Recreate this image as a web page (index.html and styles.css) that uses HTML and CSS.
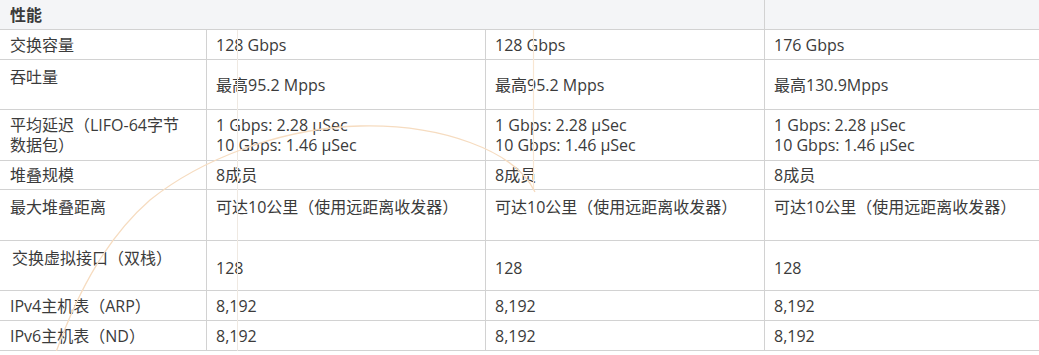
FILE: index.html
```html
<!DOCTYPE html>
<html lang="zh-CN">
<head>
<meta charset="utf-8">
<title>性能</title>
<link rel="stylesheet" href="styles.css">
</head>
<body>
<div class="spec">
  <div class="row head">
    <div class="cell span3">性能</div>
    <div class="cell"></div>
  </div>
  <div class="row h30">
    <div class="cell">交换容量</div>
    <div class="cell">128 Gbps</div>
    <div class="cell">128 Gbps</div>
    <div class="cell">176 Gbps</div>
  </div>
  <div class="row h50">
    <div class="cell top">吞吐量</div>
    <div class="cell">最高95.2 Mpps</div>
    <div class="cell">最高95.2 Mpps</div>
    <div class="cell">最高130.9Mpps</div>
  </div>
  <div class="row h51">
    <div class="cell">平均延迟（LIFO-64字节<br>数据包）</div>
    <div class="cell">1 Gbps: 2.28 μSec<br>10 Gbps: 1.46 μSec</div>
    <div class="cell">1 Gbps: 2.28 μSec<br>10 Gbps: 1.46 μSec</div>
    <div class="cell">1 Gbps: 2.28 μSec<br>10 Gbps: 1.46 μSec</div>
  </div>
  <div class="row h29">
    <div class="cell">堆叠规模</div>
    <div class="cell">8成员</div>
    <div class="cell">8成员</div>
    <div class="cell">8成员</div>
  </div>
  <div class="row h51">
    <div class="cell top">最大堆叠距离</div>
    <div class="cell top">可达10公里（使用远距离收发器）</div>
    <div class="cell top">可达10公里（使用远距离收发器）</div>
    <div class="cell top">可达10公里（使用远距离收发器）</div>
  </div>
  <div class="row h50">
    <div class="cell top indent">交换虚拟接口（双栈）</div>
    <div class="cell low">128</div>
    <div class="cell low">128</div>
    <div class="cell low">128</div>
  </div>
  <div class="row h30">
    <div class="cell">IPv4主机表（ARP）</div>
    <div class="cell">8,192</div>
    <div class="cell">8,192</div>
    <div class="cell">8,192</div>
  </div>
  <div class="row h30">
    <div class="cell">IPv6主机表（ND）</div>
    <div class="cell">8,192</div>
    <div class="cell">8,192</div>
    <div class="cell">8,192</div>
  </div>
  <svg class="watermark" width="1039" height="355" viewBox="0 0 1039 355" aria-hidden="true">
    <line x1="237.5" y1="30" x2="237.5" y2="355" stroke="#efe9e2" stroke-width="1"/>
    <line x1="533.5" y1="30" x2="533.5" y2="190" stroke="#f8e6d2" stroke-width="1.2"/>
    <path d="M 55 355 C 80 285, 110 235, 150 200 C 200 160, 280 128, 360 126 C 440 124, 515 150, 535 192" fill="none" stroke="#f6dcc0" stroke-width="1.3"/>
  </svg>
</div>
</body>
</html>
```
FILE: styles.css
```css
html, body {
  margin: 0;
  padding: 0;
  background: #ffffff;
}

body {
  font-family: "Open Sans", "Noto Sans CJK SC", sans-serif;
  font-size: 16px;
  line-height: 20px;
  color: #3b3b3b;
  overflow: hidden;
}

.spec {
  position: relative;
  width: 1039px;
}

.row {
  display: grid;
  grid-template-columns: 206px 279px 279px 1fr;
  box-sizing: border-box;
  border-bottom: 1px solid #d2d2d2;
}

.head {
  grid-template-columns: 764px 1fr;
  height: 30px;
  background: #f4f5f7;
  font-weight: 700;
}

.h29 { height: 29px; }
.h30 { height: 30px; }
.h50 { height: 50px; }
.h51 { height: 51px; }

.cell {
  display: flex;
  align-items: center;
  padding: 0 10px;
  white-space: nowrap;
}

.cell + .cell {
  border-left: 1px solid #d2d2d2;
  padding-left: 9px;
}

.cell.top {
  align-items: flex-start;
  padding-top: 7px;
}

.cell.low {
  padding-top: 4px;
}

.cell.indent {
  padding-left: 12px;
}

.watermark {
  position: absolute;
  left: 0;
  top: 0;
  pointer-events: none;
}
```
